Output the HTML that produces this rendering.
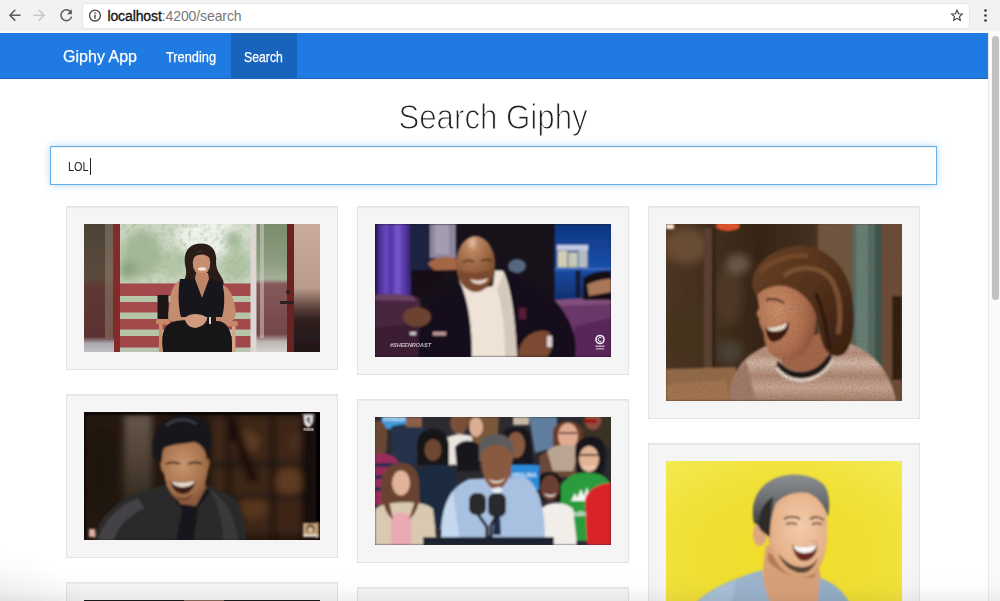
<!DOCTYPE html>
<html lang="en">
<head>
<meta charset="utf-8">
<title>Giphy App</title>
<style>
*{box-sizing:border-box;margin:0;padding:0}
html,body{width:1000px;height:601px;overflow:hidden;background:#fff;font-family:"Liberation Sans",sans-serif;}
#root{position:relative;width:1000px;height:601px;overflow:hidden;background:#fff}
.abs{position:absolute}
#chrome{left:0;top:0;width:1000px;height:33px;background:linear-gradient(to bottom,#f2f2f2 0,#f2f2f2 27px,#efefef 29.5px,#fbfbfb 32px,#fbfbfb 33px)}
#urlbox{left:83px;top:4px;width:886px;height:24px;background:#fff;border-radius:3px;box-shadow:0 0 0 1px #e6e6e6}
#url{left:107.4px;top:7.5px;font-size:14px;line-height:17px;color:#777;white-space:nowrap;letter-spacing:-0.1px}
#url b{font-weight:normal;color:#111;-webkit-text-stroke:0.3px #111}
#nav{left:0;top:32.5px;width:988px;height:46.3px;background:#1f7be1;border-bottom:1px solid #1967be}
#nav .active{left:231px;top:0;width:66px;height:45px;background:#1864bd}
#nav span{position:absolute;color:#fff;white-space:nowrap;transform-origin:0 50%;-webkit-text-stroke:0.25px #fff}
#brand{left:62.5px;top:11.5px;font-size:16.5px;line-height:24px;transform:scaleX(.972)}
#trend{left:165.5px;top:14px;font-size:14px;line-height:20px;transform:scaleX(.915)}
#srch{left:244px;top:14px;font-size:14px;line-height:20px;transform:scaleX(.875)}
#h1{left:0;top:93px;width:986px;text-align:center;font-size:35.5px;line-height:48px;color:#222;font-weight:normal;transform:scaleX(.88);transform-origin:493.3px 50%;-webkit-text-stroke:1.1px #fff}
#input{left:50.3px;top:146.2px;width:886.6px;height:38.8px;background:#fff;border:1px solid #66afe9;box-shadow:inset 0 1px 1px rgba(0,0,0,.075),0 0 7px rgba(102,175,233,.5)}
#lol{left:67.5px;top:158.5px;font-size:12.5px;line-height:16px;color:#222;transform:scaleX(.87);transform-origin:0 50%}
#caret{left:90px;top:158px;width:1px;height:17px;background:#222}
.card{position:absolute;width:272px;background:#f5f5f5;border:1px solid #e3e3e3;box-shadow:inset 0 1px 1px rgba(0,0,0,.05)}
.card svg{position:absolute;left:17px;top:17px;display:block}
#sbar{left:988px;top:33px;width:12px;height:568px;background:#fafafa;border-left:1px solid #e8e8e8}
#thumb{left:992.3px;top:35.5px;width:6.4px;height:264px;border-radius:4px;background:#c1c1c1}
#fade{left:0;top:571px;width:1000px;height:30px;background:linear-gradient(to bottom,rgba(0,0,0,0),rgba(0,0,0,.015) 60%,rgba(0,0,0,.06))}
#fade2{left:-60px;top:541px;width:160px;height:120px;background:radial-gradient(ellipse at 30% 75%,rgba(0,0,0,.09),rgba(0,0,0,0) 65%)}
</style>
</head>
<body>
<div id="root">
  <div id="chrome" class="abs"></div>
  <div id="urlbox" class="abs"></div>
  <div id="url" class="abs"><b>localhost</b>:4200/search</div>
  <svg class="abs" style="left:0;top:0" width="110" height="33" viewBox="0 0 110 33">
    <g fill="none" stroke="#5c5c5c" stroke-width="1.5" stroke-linecap="butt" stroke-linejoin="miter">
      <path d="M20.6 15.2H10.2M15.3 9.8L9.9 15.2L15.3 20.6"/>
      <path d="M33.4 15.2H43.8M38.7 9.8L44.1 15.2L38.7 20.6" stroke="#c9c9c9"/>
      <path d="M70.4 11.6A5.4 5.4 0 1 0 71.6 16.6"/>
      <circle cx="95" cy="15.6" r="5.4" stroke="#444" stroke-width="1.3"/>
    </g>
    <path d="M71.9 9.3V14.2H67z" fill="#5c5c5c"/>
    <rect x="94.3" y="14.6" width="1.4" height="4.2" fill="#444"/>
    <rect x="94.3" y="12.3" width="1.4" height="1.4" fill="#444"/>
  </svg>
  <svg class="abs" style="left:940px;top:0" width="60" height="33" viewBox="0 0 60 33">
    <path d="M17 10.2l1.55 3.5 3.8.35-2.85 2.55.85 3.7L17 18.3l-3.35 2 .85-3.7-2.85-2.55 3.8-.35z" fill="none" stroke="#444" stroke-width="1.15" stroke-linejoin="miter"/>
    <circle cx="45.5" cy="10.5" r="1.3" fill="#333"/><circle cx="45.5" cy="15.5" r="1.3" fill="#333"/><circle cx="45.5" cy="20.5" r="1.3" fill="#333"/>
  </svg>
  <div id="nav" class="abs">
    <div class="abs active"></div>
    <span id="brand">Giphy App</span>
    <span id="trend">Trending</span>
    <span id="srch">Search</span>
  </div>
  <h1 id="h1" class="abs">Search Giphy</h1>
  <div id="input" class="abs"></div>
  <div id="lol" class="abs">LOL</div>
  <div id="caret" class="abs"></div>

  <div class="card" id="c1" style="left:66px;top:206px;height:164px"><svg width="236" height="128" viewBox="0 0 236 128">
<defs>
<filter id="b1" x="-5%" y="-5%" width="110%" height="110%"><feGaussianBlur stdDeviation="0.7"/></filter>
<filter id="b1b" x="-20%" y="-20%" width="140%" height="140%"><feGaussianBlur stdDeviation="4"/></filter>
<filter id="n1" x="0" y="0" width="100%" height="100%"><feTurbulence type="fractalNoise" baseFrequency="0.22" numOctaves="2" seed="3" result="t"/><feColorMatrix in="t" type="matrix" values="0 0 0 0 0.35  0 0 0 0 0.45  0 0 0 0 0.3  0.9 0.9 0 0 -0.82"/><feGaussianBlur stdDeviation="0.6"/></filter>
<linearGradient id="g1cur" x1="0" y1="0" x2="0" y2="1"><stop offset="0" stop-color="#4b4336"/><stop offset=".42" stop-color="#5b4a3c"/><stop offset=".48" stop-color="#5e3a34"/><stop offset=".88" stop-color="#5a3230"/><stop offset=".93" stop-color="#a9a6ac"/><stop offset="1" stop-color="#c2c0c4"/></linearGradient>
<linearGradient id="g1wall" x1="0" y1="0" x2="0" y2="1"><stop offset="0" stop-color="#c9ab9b"/><stop offset=".5" stop-color="#b99a8b"/><stop offset=".66" stop-color="#5a403a"/><stop offset=".75" stop-color="#30201f"/><stop offset="1" stop-color="#221618"/></linearGradient>
<linearGradient id="g1door" x1="0" y1="0" x2="0" y2="1"><stop offset="0" stop-color="#7a8c6e"/><stop offset=".3" stop-color="#8c9c80"/><stop offset=".43" stop-color="#a4b098"/><stop offset=".47" stop-color="#86585a"/><stop offset=".86" stop-color="#744648"/><stop offset=".92" stop-color="#bdb6b4"/><stop offset="1" stop-color="#d4d0cc"/></linearGradient>
</defs>
<rect width="236" height="128" fill="#cbd7c2"/>
<g filter="url(#b1b)">
<ellipse cx="58" cy="30" rx="20" ry="24" fill="#a3b897"/>
<ellipse cx="44" cy="46" rx="10" ry="10" fill="#8aa27e"/>
<ellipse cx="128" cy="12" rx="36" ry="20" fill="#eef2ea"/>
<ellipse cx="152" cy="42" rx="16" ry="16" fill="#b0c4a4"/>
<ellipse cx="90" cy="40" rx="14" ry="14" fill="#b2c6a6"/>
<ellipse cx="150" cy="16" rx="10" ry="10" fill="#a2b896"/>
</g>
<rect x="36" y="0" width="134" height="60" filter="url(#n1)"/>
<g filter="url(#b1)">
<rect x="36" y="59" width="134" height="69" fill="#b6c4a8"/>
<rect x="36" y="59.500" width="134" height="12.500" fill="#a4494b"/>
<rect x="36" y="78" width="134" height="10.500" fill="#a64b4d"/>
<rect x="36" y="95" width="134" height="10.500" fill="#a2484a"/>
<rect x="36" y="112" width="134" height="11.500" fill="#a0474a"/>
<rect x="36" y="124" width="134" height="4" fill="#b8c4b0"/>
<rect x="0" y="0" width="31" height="128" fill="url(#g1cur)"/>
<rect x="21" y="0" width="8" height="114" fill="#9a8a78" opacity=".45"/>
<rect x="30" y="0" width="6" height="128" fill="#83292c"/>
<rect x="166.500" y="0" width="6" height="128" fill="#ddd6d3"/>
<rect x="172.500" y="0" width="31" height="128" fill="url(#g1door)"/>
<rect x="176" y="0" width="4" height="114" fill="#d8d4cc" opacity=".5"/>
<rect x="203" y="0" width="7.500" height="128" fill="#6b2224"/>
<rect x="210" y="0" width="26" height="128" fill="url(#g1wall)"/>
<rect x="196" y="77" width="14" height="3" fill="#2a2020"/>
<circle cx="204" cy="68" r="2" fill="#2a2020"/>
<!-- chair -->
<rect x="73.500" y="71" width="11" height="24" fill="#1b1718"/>
<rect x="75" y="100" width="3.500" height="28" fill="#c9906c"/>
<rect x="140" y="102" width="3.500" height="26" fill="#c58a6a"/>
<rect x="148" y="102" width="3.500" height="26" fill="#d2a48a"/>
<rect x="72" y="95" width="14" height="5.500" rx="2" fill="#c48866"/>
<rect x="140" y="97" width="14" height="5.500" rx="2" fill="#c48866"/>
<!-- woman -->
<path d="M101 40C99 27 106 19.500 117 19.500C128 19.500 133 27 132 38C132 46 136 50 139 56C141 62 138 68 132 69L104 68C99 66 99 60 101 54C103 49 102 45 101 40Z" fill="#2a1b19"/>
<ellipse cx="117.500" cy="39" rx="8.800" ry="12" fill="#c98f70"/>
<path d="M108 36C110 27 119 24 127 30C129 33 129 36 128 38C126 32 120 29 114 31C110 32 109 35 108 40Z" fill="#2a1b19"/>
<path d="M112 49L124 49L126 60L118 76L110 60Z" fill="#bd8466"/>
<ellipse cx="118" cy="45" rx="4.200" ry="1.700" fill="#f3e6de"/>
<path d="M98 56C92 57 87 64 86 76C85 86 83 92 86 97L108 100L108 93L97 88Z" fill="#c48d70"/>
<path d="M136 60C146 62 150 74 151.500 86C152.500 93 150 98 142 100L124 100L126 93L139 89Z" fill="#c48d70"/>
<path d="M96 55L111 55L118 74L125 55L138 58C141 70 141 82 138 93L97 93C94 82 94 67 96 55Z" fill="#17141a"/>
<path d="M80 106C84 97 96 95 108 97L134 97C144 98 149 108 148 128L79 128C78 118 78 112 80 106Z" fill="#141217"/>
<path d="M101 94C105 89 116 89 122 93C124 97 120 102 112 104C106 104 101 100 101 94Z" fill="#cf9a7e"/>
<rect x="123" y="92" width="9" height="9" rx="2.500" fill="#1a1616"/>
<rect x="125" y="93" width="2" height="7" fill="#d8d0c8"/>
</g>
</svg></div>
  <div class="card" id="c2" style="left:357px;top:206px;height:169px"><svg width="236" height="133" viewBox="0 0 236 133">
<defs>
<filter id="b2" x="-5%" y="-5%" width="110%" height="110%"><feGaussianBlur stdDeviation="0.9"/></filter>
<filter id="b2b" x="-20%" y="-20%" width="140%" height="140%"><feGaussianBlur stdDeviation="2.500"/></filter>
<linearGradient id="g2cur" x1="0" y1="0" x2="1" y2="0"><stop offset="0" stop-color="#1c1238"/><stop offset=".12" stop-color="#4c2e98"/><stop offset=".3" stop-color="#6a48c0"/><stop offset=".45" stop-color="#5232a4"/><stop offset=".62" stop-color="#7a5acc"/><stop offset=".8" stop-color="#5a3aac"/><stop offset="1" stop-color="#34246c"/></linearGradient>
<radialGradient id="g2head" cx=".42" cy=".12" r=".9"><stop offset="0" stop-color="#e8c0a4"/><stop offset=".18" stop-color="#b88460"/><stop offset=".55" stop-color="#96623f"/><stop offset="1" stop-color="#6e3e24"/></radialGradient>
<linearGradient id="g2blue" x1="0" y1="0" x2="0" y2="1"><stop offset="0" stop-color="#0e3680"/><stop offset=".55" stop-color="#184ea8"/><stop offset="1" stop-color="#103070"/></linearGradient>
</defs>
<rect width="236" height="133" fill="#17121a"/>
<g filter="url(#b2)">
<rect x="0" y="0" width="36" height="73" fill="url(#g2cur)"/>
<rect x="179.500" y="0" width="57" height="76" fill="url(#g2blue)"/>
<rect x="179.500" y="44" width="57" height="2" fill="#3a6ac0"/>
<rect x="35" y="0" width="22" height="52" fill="#1c2240"/>
<rect x="55" y="0" width="26" height="34" fill="#8e869e"/>
<rect x="60" y="0" width="14" height="30" fill="#a69cb2"/>
<path d="M53 40C57 33 70 31 82 35L82 46L60 47Z" fill="#a46644"/>
<path d="M36 46L68 46L64 72L36 72Z" fill="#120f14"/>
<ellipse cx="142" cy="42" rx="9" ry="7" fill="#56667c"/>
<!-- couch -->
<path d="M0 71C14 69 30 70 44 74L56 133L0 133Z" fill="#4a2840"/>
<path d="M0 71C14 69 30 70 40 73L40 77L0 76Z" fill="#6a4262"/>
<path d="M0 104L50 98L56 133L0 133Z" fill="#3a1c30"/>
<path d="M168 78C190 74 220 74 236 76L236 133L160 133Z" fill="#6b3868"/>
<path d="M168 78C190 74 220 74 236 76L236 80L168 82Z" fill="#82507e"/>
<path d="M200 102L236 94L236 133L196 133Z" fill="#58285a"/>
<!-- glasses -->
<rect x="182" y="21" width="31" height="23" fill="#6f7f98"/>
<rect x="183" y="27" width="9" height="16" fill="#d4ccb4"/>
<rect x="193.500" y="29" width="9" height="14" fill="#c4c8b4"/>
<rect x="204" y="26" width="8" height="17" fill="#b4bcc4"/>
<rect x="182" y="21" width="31" height="5" fill="#c4cce4"/>
<rect x="200.500" y="46" width="5" height="28" fill="#141a30"/>
<!-- right person -->
<path d="M208 54C216 48 230 46 236 47L236 76L208 76Z" fill="#121016"/>
<path d="M212 61C220 56 230 55 236 55L236 68L214 72Z" fill="#a87858"/>
<!-- man jacket -->
<path d="M44 133C42 110 46 86 60 72C72 62 88 56 98 56L126 44C150 50 176 66 190 90C200 106 202 120 200 133Z" fill="#14111a"/>
<!-- shirt -->
<path d="M84 52L92 50L100 66L118 62L120 46L128 47C134 58 140 84 142 133L97 133C97 104 94 76 84 56Z" fill="#efe3d7"/>
<path d="M122 66C128 84 130 108 130 133L142 133C140 100 136 70 128 50Z" fill="#d5c8bc"/>
<!-- head -->
<ellipse cx="100.500" cy="40" rx="19.500" ry="28" fill="url(#g2head)"/>
<path d="M84 46C92 50 110 50 119 44C119 58 110 68 101 68C92 68 85 58 84 46Z" fill="#7c4a2e"/>
<path d="M95 55C100 57 108 57 113 54C112 58 108 60 104 60C100 60 96 58 95 55Z" fill="#e6d6ca"/>
<path d="M88 38C92 36 96 36 99 38M106 37C110 35 114 35 117 37" stroke="#4a2816" stroke-width="1.600" fill="none"/>
<rect x="144" y="84" width="7" height="11" fill="#561a34"/>
<path d="M144 126C148 110 164 104 174 108C180 114 178 126 172 133L143 133Z" fill="#7c4a30"/>
<rect x="172" y="112" width="5" height="11" fill="#d8d0cc"/>
<ellipse cx="42" cy="93" rx="14" ry="10" fill="#6c4232"/>
<rect x="35" y="108" width="6" height="3" fill="#d0c8c8"/>
<rect x="58" y="108" width="13" height="3.500" fill="#c09898"/>
</g>
<text x="15" y="123" font-family="Liberation Sans, sans-serif" font-size="6" font-weight="bold" font-style="italic" fill="#e6e0e6" opacity=".8" textLength="41" lengthAdjust="spacingAndGlyphs">#SHEENROAST</text>
<circle cx="225" cy="115.500" r="4" fill="none" stroke="#f0f0f0" stroke-width="1.600"/>
<path d="M226.500 114A2 2 0 1 0 226.500 117" stroke="#f0f0f0" stroke-width="1" fill="none"/>
<rect x="220.500" y="121.500" width="9" height="1.500" fill="#d0c8d0" opacity=".8"/>
<rect x="221" y="124" width="8" height="1.500" fill="#d0c8d0" opacity=".7"/>
</svg></div>
  <div class="card" id="c3" style="left:648px;top:206px;height:213px"><svg width="236" height="177" viewBox="0 0 236 177">
<defs>
<filter id="b3" x="-5%" y="-5%" width="110%" height="110%"><feGaussianBlur stdDeviation="1.1"/></filter>
<filter id="b3b" x="-20%" y="-20%" width="140%" height="140%"><feGaussianBlur stdDeviation="4"/></filter>
<filter id="n3" x="0" y="0" width="100%" height="100%"><feTurbulence type="fractalNoise" baseFrequency="0.5" numOctaves="2" seed="7" result="t"/><feColorMatrix in="t" type="matrix" values="0 0 0 0 0.1  0 0 0 0 0.06  0 0 0 0 0.03  0.8 0.8 0 0 -0.7"/></filter>
<linearGradient id="g3bg" x1="0" y1="0" x2="1" y2="0"><stop offset="0" stop-color="#4c3422"/><stop offset=".2" stop-color="#412c1c"/><stop offset=".4" stop-color="#332214"/><stop offset=".62" stop-color="#432e1f"/><stop offset=".75" stop-color="#6e523a"/><stop offset="1" stop-color="#644632"/></linearGradient>
<linearGradient id="g3shirt" x1="0" y1="0" x2="0" y2="1"><stop offset="0" stop-color="#cdae9e"/><stop offset=".22" stop-color="#b48c7a"/><stop offset=".38" stop-color="#d2b6a6"/><stop offset=".58" stop-color="#ac8672"/><stop offset=".78" stop-color="#c8a694"/><stop offset="1" stop-color="#a47c68"/></linearGradient>
<radialGradient id="g3face" cx=".35" cy=".45" r=".75"><stop offset="0" stop-color="#cc8e6a"/><stop offset=".6" stop-color="#b07050"/><stop offset="1" stop-color="#854a32"/></radialGradient>
<linearGradient id="g3hair" x1="0" y1="0" x2="1" y2="1"><stop offset="0" stop-color="#6a4226"/><stop offset=".5" stop-color="#52301a"/><stop offset="1" stop-color="#341c0e"/></linearGradient>
</defs>
<rect width="236" height="177" fill="url(#g3bg)"/>
<g filter="url(#b3b)">
<ellipse cx="20" cy="22" rx="22" ry="18" fill="#6b4e35"/>
<ellipse cx="62" cy="72" rx="14" ry="30" fill="#4e3828"/>
<ellipse cx="72" cy="40" rx="12" ry="10" fill="#6c5848"/>
<ellipse cx="26" cy="110" rx="26" ry="30" fill="#45301f"/>
<ellipse cx="64" cy="128" rx="12" ry="12" fill="#4a4238"/>
</g>
<g filter="url(#b3)">
<rect x="0" y="0" width="8" height="5" fill="#fff0e8"/>
<ellipse cx="62" cy="2" rx="12" ry="5" fill="#e4532a"/>
<rect x="38" y="4" width="8" height="140" fill="#5a4130"/>
<rect x="46" y="4" width="3" height="140" fill="#2c1d14"/>
<rect x="110" y="0" width="8" height="30" fill="#3a2a1e"/>
<rect x="152" y="0" width="36" height="120" fill="#70563f"/>
<rect x="187" y="0" width="30" height="177" fill="#526a62"/>
<rect x="190" y="0" width="12" height="177" fill="#667f76"/>
<rect x="209" y="0" width="8" height="177" fill="#3e524b"/>
<rect x="216" y="0" width="20" height="177" fill="#6c4c38"/>
<rect x="226" y="72" width="10" height="84" fill="#2e1c10"/>
<path d="M0 145L70 143L70 177L0 177Z" fill="#946a48"/>
<path d="M0 160L60 156L64 177L0 177Z" fill="#a27450"/>
<!-- shirt -->
<path d="M64 177C64 150 76 132 100 122L170 116C200 122 222 140 230 177Z" fill="url(#g3shirt)"/>
<path d="M64 177C64 160 70 146 80 136L90 177Z" fill="#a07a68"/>
<!-- neck -->
<path d="M112 120L160 108L162 138C150 150 128 150 116 140Z" fill="#a4664a"/>
<path d="M112 136C124 152 150 154 164 128L166 134C154 160 122 160 110 142Z" fill="#1e1614"/>
<path d="M111 142C123 160 153 160 166 135L167 137C154 163 122 163 110 145Z" fill="#e8dcd0"/>
<!-- face -->
<path d="M92 62C96 48 112 42 130 46C146 52 152 76 150 100C148 122 134 138 118 136C104 134 98 122 98 110C96 104 92 100 93 94C90 92 90 88 93 84C92 76 90 70 92 62Z" fill="url(#g3face)"/>
<!-- mouth -->
<path d="M99 103C106 104 116 102 123 98C124 108 116 118 106 118C102 116 100 110 99 103Z" fill="#3a1810"/>
<path d="M100 103.500C107 104 115 102 121 99C121 103 118 106 112 107C107 108 103 107 100 103.500Z" fill="#f0e0d0"/>
<path d="M100 76C106 74 112 75 118 79" stroke="#3a2014" stroke-width="2" fill="none"/>
<!-- hair -->
<path d="M86 62C86 40 104 26 130 22C158 20 180 40 186 70C190 96 188 120 178 130C168 136 160 130 156 118C152 104 152 92 146 82C140 72 130 64 118 62C108 61 98 64 90 72Z" fill="url(#g3hair)"/>
<path d="M118 52C130 42 150 40 164 54C174 68 176 90 172 110" stroke="#7c5030" stroke-width="5" fill="none"/>
<path d="M94 48C106 36 124 30 142 32" stroke="#76492a" stroke-width="4.500" fill="none"/>
<path d="M150 70C158 86 160 106 164 124" stroke="#2e180c" stroke-width="4" fill="none"/>
</g>
<rect width="236" height="177" filter="url(#n3)" opacity=".5"/>
</svg></div>
  <div class="card" id="c4" style="left:66px;top:394px;height:164px"><svg width="236" height="128" viewBox="0 0 236 128">
<defs>
<filter id="b4" x="-5%" y="-5%" width="110%" height="110%"><feGaussianBlur stdDeviation="0.9"/></filter>
<filter id="b4b" x="-20%" y="-20%" width="140%" height="140%"><feGaussianBlur stdDeviation="3.500"/></filter>
<linearGradient id="g4col" x1="0" y1="0" x2="0" y2="1"><stop offset="0" stop-color="#66574a"/><stop offset=".5" stop-color="#4e4034"/><stop offset="1" stop-color="#2c221b"/></linearGradient>
<radialGradient id="g4face" cx=".45" cy=".4" r=".7"><stop offset="0" stop-color="#c8946e"/><stop offset=".6" stop-color="#a8744f"/><stop offset="1" stop-color="#7a4c30"/></radialGradient>
</defs>
<rect width="236" height="128" fill="#241710"/>
<g filter="url(#b4b)">
<rect x="40" y="2" width="28" height="100" fill="url(#g4col)"/>
<rect x="128" y="4" width="104" height="118" fill="#3e2616"/>
<ellipse cx="160" cy="30" rx="16" ry="12" fill="#5a3a22"/>
<ellipse cx="205" cy="70" rx="14" ry="14" fill="#5e3a20"/>
<ellipse cx="170" cy="96" rx="14" ry="12" fill="#55341e"/>
<ellipse cx="212" cy="30" rx="10" ry="10" fill="#4a2e1a"/>
<rect x="142" y="0" width="6" height="128" fill="#1a100a"/>
<rect x="186" y="0" width="6" height="128" fill="#1c110b"/>
<rect x="128" y="50" width="104" height="5" fill="#1e120c"/>
<rect x="128" y="82" width="104" height="5" fill="#1e120c"/>
<ellipse cx="18" cy="60" rx="14" ry="40" fill="#1c130e"/>
<rect x="217" y="0" width="20" height="128" fill="#0c0806" opacity=".75"/>
<path d="M138 0L150 0L176 70L164 70Z" fill="#1a0e08"/>
</g>
<g filter="url(#b4)">
<rect x="0" y="0" width="236" height="2.500" fill="#050505"/>
<rect x="232.500" y="0" width="4" height="128" fill="#050505"/>
<rect x="0" y="0" width="1.500" height="128" fill="#050505"/>
<!-- jacket -->
<path d="M10 128C14 106 30 90 52 82L88 70L126 74L150 86C160 98 162 114 162 128Z" fill="#2b292c"/>
<path d="M14 128C20 108 34 94 54 86L60 96C44 104 34 114 30 128Z" fill="#454346"/>
<path d="M84 78L98 98L92 128L110 128L114 96L126 80L118 72Z" fill="#19181b"/>
<path d="M126 78C140 86 150 100 154 128L140 128C138 108 134 92 126 78Z" fill="#3a383b"/>
<!-- neck/face -->
<path d="M88 70L96 92L112 94L122 76L120 60Z" fill="#8a5a3c"/>
<path d="M78 40C78 30 88 26 100 27C114 27 122 34 123 46C126 46 127 52 124 58C122 74 114 90 102 91C90 90 82 76 80 62C76 58 75 50 78 46Z" fill="url(#g4face)"/>
<path d="M86 69C94 71 104 71 112 68C110 78 104 82 99 82C93 82 88 77 86 69Z" fill="#3a1a12"/>
<path d="M87 69.500C94 71 104 71 111 68.500C110 73 104 75 99 75C94 75 89 73 87 69.500Z" fill="#eadccf"/>
<path d="M82 52C86 50 92 50 96 52M104 52C108 50 114 50 118 52" stroke="#2a1810" stroke-width="1.800" fill="none"/>
<path d="M90 82C94 88 104 88 108 82C106 90 94 90 90 82Z" fill="#4a3020"/>
<!-- hair -->
<path d="M70 44C66 24 76 8 96 4C116 0 128 12 127 30C127 38 125 44 123 48C122 38 118 32 110 30C100 32 88 32 80 36C78 40 78 46 78 50C74 50 71 48 70 44Z" fill="#15151b"/>
<path d="M82 14C90 6 104 6 112 12" stroke="#3a3c48" stroke-width="2.500" fill="none"/>
<!-- logos -->
<path d="M219.500 3L229.500 3L229 10C228 13 226 14.500 224.500 15.500C222.500 14.500 220.500 13 220 10Z" fill="#f4f4f4"/>
<path d="M222.500 5.500L227 5.500L227 7.500L224.500 7.500L224.500 9L226.500 9L226.500 11.500L225 12.500L225 10.500L223 10.500Z" fill="#15151b"/>
<rect x="219" y="111" width="15" height="14" fill="#c9a27c"/>
<ellipse cx="226.500" cy="117" rx="4" ry="4.500" fill="#3a2a20"/>
<ellipse cx="226.500" cy="118" rx="2.600" ry="3" fill="#e0c0a0"/>
<rect x="219" y="122.500" width="15" height="2.500" fill="#e8e0d0"/>
<rect x="5" y="117" width="6" height="8" fill="#e0b0a4"/>
</g>
<text x="219.500" y="18.600" font-family="Liberation Sans, sans-serif" font-size="2.800" font-weight="bold" fill="#f0f0f0" textLength="10" lengthAdjust="spacingAndGlyphs">FUSION</text>
</svg></div>
  <div class="card" id="c5" style="left:357px;top:399px;height:164px"><svg width="236" height="128" viewBox="0 0 236 128">
<defs>
<filter id="b5" x="-5%" y="-5%" width="110%" height="110%"><feGaussianBlur stdDeviation="0.8"/></filter>
</defs>
<rect width="236" height="128" fill="#2b2a30"/>
<g filter="url(#b5)">
<!-- back row -->
<rect x="6.500" y="0" width="25.500" height="12" fill="#3f9bd9"/>
<text x="8" y="4" font-family="Liberation Sans, sans-serif" font-size="5.500" font-weight="bold" fill="#eef6fc" textLength="22" lengthAdjust="spacingAndGlyphs">STRONGER</text>
<path d="M16 10C22 6 44 6 52 12L56 48L18 48Z" fill="#27334a"/>
<rect x="31" y="0" width="16" height="10" fill="#8a6048"/>
<ellipse cx="84" cy="6" rx="9" ry="11" fill="#7a5038"/>
<path d="M70 22C76 16 92 16 98 20L96 48L72 48Z" fill="#e9e5dd"/>
<path d="M92 0L124 0L122 30L100 34Z" fill="#7a5838"/>
<ellipse cx="101" cy="10" rx="7" ry="10" fill="#dcae94"/>
<path d="M80 30C86 22 98 22 104 28L104 54L82 54Z" fill="#19191d"/>
<path d="M154 0L182 0L182 30L160 36Z" fill="#5e7e9e"/>
<rect x="138" y="0" width="16" height="8" fill="#c8b8a8"/>
<!-- far left person -->
<path d="M0 4C8 2 14 10 12 24C12 34 10 40 4 42L0 40Z" fill="#6a4630"/>
<path d="M0 38C10 34 22 38 24 48L22 88L0 88Z" fill="#9b2b5c"/>
<rect x="0" y="46" width="23" height="4" fill="#2a2a50"/>
<rect x="0" y="58" width="23" height="4" fill="#2a2a50"/>
<rect x="0" y="70" width="22" height="4" fill="#2a2a50"/>
<!-- dark-skinned woman -->
<path d="M42 28C42 16 50 12 58 12C68 12 74 18 74 30L74 48L42 48Z" fill="#141418"/>
<ellipse cx="58" cy="33" rx="8.500" ry="11" fill="#6e4632"/>
<path d="M40 54C46 46 72 46 80 52L84 112L44 112Z" fill="#1d2940"/>
<!-- dreads man -->
<path d="M126 20C128 8 150 6 156 18L158 48L128 48Z" fill="#17151a"/>
<ellipse cx="141" cy="28" rx="9" ry="13" fill="#8a5a40"/>
<!-- glasses woman top -->
<path d="M178 14C180 2 204 0 208 14L208 30L178 30Z" fill="#6a3a28"/>
<ellipse cx="193" cy="19" rx="10" ry="13" fill="#e2ab92"/>
<path d="M184 16L202 16" stroke="#3a2a28" stroke-width="1.500"/>
<path d="M164 40C172 30 200 28 206 36L204 60L166 60Z" fill="#6a4a38"/>
<path d="M172 34C180 26 198 26 204 32L198 54L178 54Z" fill="#b9a592"/>
<!-- top right person -->
<path d="M206 0L236 0L236 30L210 26Z" fill="#3a3028"/>
<ellipse cx="218" cy="4" rx="8" ry="9" fill="#8a5040"/>
<rect x="210" y="2" width="12" height="4" fill="#a01818"/>
<!-- asian woman -->
<path d="M200 36C200 22 212 18 220 20C230 22 232 34 230 48L228 60L202 60Z" fill="#15141a"/>
<ellipse cx="214" cy="42" rx="10" ry="13" fill="#e3b494"/>
<path d="M205 38L224 38" stroke="#2a2020" stroke-width="1.600"/>
<path d="M208 48C212 51 218 51 221 47C220 52 210 53 208 48Z" fill="#f4ece8"/>
<!-- green hoodie -->
<path d="M184 72C190 58 204 54 216 56C226 56 236 62 236 70L236 124L188 124Z" fill="#2a9c3c"/>
<path d="M196 84L200 76L204 84ZM201 84L206 72L211 84ZM207 84L212 70L216 84Z" fill="#f2f6f2"/>
<rect x="196" y="85" width="20" height="1.600" fill="#2a9c3c"/>
<text x="197" y="98.500" font-family="Liberation Sans, sans-serif" font-size="8" font-weight="bold" fill="#f2f6f2">adidas</text>
<!-- red jacket -->
<path d="M210 82C214 70 228 66 236 66L236 128L212 128Z" fill="#da2129"/>
<!-- blue sign -->
<rect x="136" y="48" width="28.500" height="25" fill="#2b8bd9"/>
<text x="131.500" y="60" font-family="Liberation Sans, sans-serif" font-size="5.500" font-weight="bold" fill="#eef6fc" textLength="30" lengthAdjust="spacingAndGlyphs">CAROLINA</text>
<!-- black woman front -->
<path d="M164 62C164 52 186 52 186 64L186 84L164 84Z" fill="#121216"/>
<ellipse cx="175" cy="71" rx="9.500" ry="13" fill="#6a4030"/>
<path d="M169 76C173 79 178 79 181 76C180 81 171 81 169 76Z" fill="#f6f0ec"/>
<path d="M166 92C172 84 190 84 198 92L202 128L168 128Z" fill="#f1ede9"/>
<!-- girl left -->
<path d="M6 70C6 52 16 46 26 46C38 46 46 54 44 72L46 100L6 100Z" fill="#6b4230"/>
<ellipse cx="26" cy="66" rx="9" ry="12.500" fill="#e2b39b"/>
<path d="M0 92C6 84 50 82 58 92L62 128L0 128Z" fill="#d9c9b1"/>
<path d="M16 100C20 94 32 94 36 100L36 128L16 128Z" fill="#e9a9b3"/>
<path d="M8 84C10 94 14 100 18 102L14 84ZM44 84C42 94 38 100 34 102L40 84Z" fill="#6b4230"/>
<!-- obama -->
<path d="M66 120C66 92 74 70 94 62L150 60C164 68 170 92 170 120Z" fill="#a9c1e1"/>
<path d="M66 120C66 100 70 84 78 74L84 120Z" fill="#c4d8f0"/>
<path d="M104 36C102 22 112 16 122 17C132 17 140 24 138 36L138 44L104 44Z" fill="#5c5b5c"/>
<path d="M106 40C106 32 114 28 122 28C132 28 138 34 137 44C137 58 130 72 122 73C112 72 106 58 106 40Z" fill="#8a5a40"/>
<path d="M114 62C118 65 126 65 130 61C128 67 116 68 114 62Z" fill="#f0e6e0"/>
<path d="M116 72L122 80L128 72L124 70Z" fill="#e8eef6"/>
<path d="M120 78L124 78L126 118L118 118Z" fill="#232b45"/>
<!-- mics -->
<rect x="94" y="76" width="17" height="22" rx="7" fill="#2a2a2c"/>
<rect x="113" y="76" width="18" height="24" rx="7" fill="#2c2c2e"/>
<path d="M102 96L112 110L112 120L116 120L116 108L122 98" stroke="#1c1c20" stroke-width="3" fill="none"/>
<rect x="48" y="120" width="131" height="8" fill="#1d2330"/>
</g>
</svg></div>
  <div class="card" id="c6" style="left:648px;top:443px;height:200px"><svg width="236" height="160" viewBox="0 0 236 160">
<defs>
<filter id="b6" x="-5%" y="-5%" width="110%" height="110%"><feGaussianBlur stdDeviation="0.9"/></filter>
<radialGradient id="g6bg" cx=".5" cy=".6" r=".85"><stop offset="0" stop-color="#f0dc2a"/><stop offset=".55" stop-color="#f1e036"/><stop offset="1" stop-color="#f4ec58"/></radialGradient>
<linearGradient id="g6hair" x1="0" y1="0" x2="0" y2="1"><stop offset="0" stop-color="#8c9092"/><stop offset=".45" stop-color="#6a6c6e"/><stop offset="1" stop-color="#2e2c2c"/></linearGradient>
<radialGradient id="g6face" cx=".55" cy=".4" r=".7"><stop offset="0" stop-color="#f4ccaa"/><stop offset=".7" stop-color="#e4b088"/><stop offset="1" stop-color="#c48a62"/></radialGradient>
</defs>
<rect width="236" height="160" fill="url(#g6bg)"/>
<g filter="url(#b6)">
<!-- neck -->
<path d="M100 84L152 100L156 124C156 150 150 160 150 160L104 160C100 140 96 120 97 108Z" fill="#d7a07a"/>
<path d="M102 92L150 106L149 116C132 120 112 112 102 100Z" fill="#b27a56"/>
<!-- shirt -->
<path d="M20 160C24 138 52 122 96 109C98 130 106 150 116 160Z" fill="#9bb3cb"/>
<path d="M20 160C26 140 46 128 70 119L62 160Z" fill="#a9c0d6"/>
<path d="M153 117C172 122 186 138 190 160L146 160C152 146 154 130 153 117Z" fill="#94adc6"/>
<!-- ear -->
<ellipse cx="94" cy="73" rx="7" ry="12" fill="#dca680"/>
<!-- face -->
<path d="M104 50C108 34 126 28 144 32C158 36 162 50 161 66C162 84 159 100 150 111C142 119 128 119 117 109C106 98 102 84 102 70C100 64 102 56 104 50Z" fill="url(#g6face)"/>
<!-- beard -->
<path d="M112 92C116 104 126 112 136 112C144 112 150 104 152 96C148 104 142 106 136 106C126 106 118 100 112 92Z" fill="#5a4434"/>
<path d="M124 82C130 78 146 78 152 82C150 80 146 79 138 79C132 79 128 80 124 82Z" fill="#6a4a38"/>
<path d="M126 84C132 86 146 86 151 83C152 92 146 100 138 100C132 100 128 94 126 84Z" fill="#6a2a22"/>
<path d="M127 84.500C133 86 146 86 150.500 83.500C150 89 146 92 139 92C133 92 129 90 127 84.500Z" fill="#fbf7f2"/>
<path d="M118 58C122 55 130 55 134 58M144 58C148 55 154 56 158 59" stroke="#3a2a22" stroke-width="1.700" fill="none"/>
<path d="M120 63C124 62 128 62 131 63.500M146 63.500C149 62 153 62 156 63.500" stroke="#3a2a22" stroke-width="1.500" fill="none"/>
<!-- hair -->
<path d="M88 62C84 44 90 28 104 20C120 10 146 12 158 24C164 32 164 44 162 56C158 44 152 36 142 32C130 30 118 34 110 42C106 52 104 62 104 72C100 70 96 64 92 64Z" fill="url(#g6hair)"/>
<path d="M92 64C94 50 98 40 108 36C104 46 104 60 104 76C98 72 94 70 92 64Z" fill="#2e2c2c"/>
</g>
</svg></div>
  <div class="card" id="c7" style="left:66px;top:582px;height:100px"><svg width="236" height="60" viewBox="0 0 236 60"><rect width="236" height="60" fill="#1b1a1c"/><rect x="100" y="0" width="40" height="60" fill="#8a6a5c"/></svg></div>
  <div class="card" id="c8" style="left:357px;top:587px;height:100px"><!-- IMG8 --></div>

  <div id="sbar" class="abs"></div>
  <div id="thumb" class="abs"></div>
  <div id="fade" class="abs"></div>
  <div id="fade2" class="abs"></div>
</div>
</body>
</html>
